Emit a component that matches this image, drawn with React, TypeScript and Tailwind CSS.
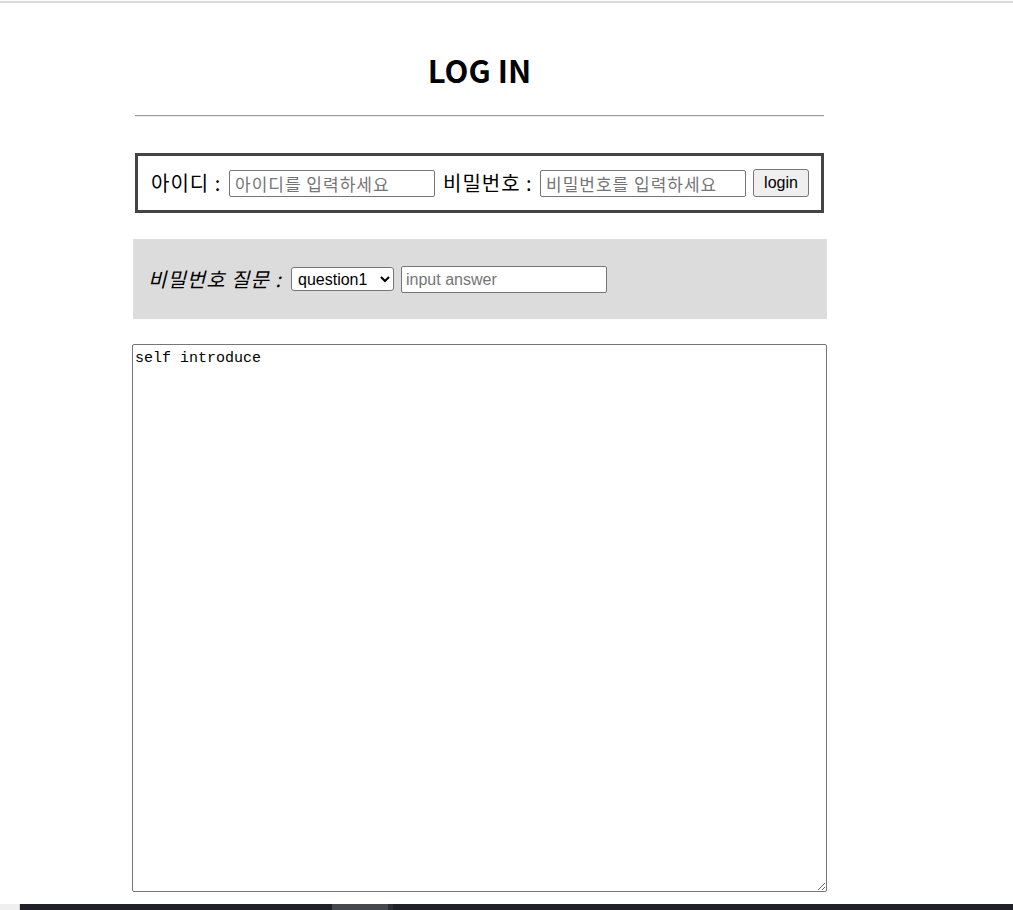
import React from "react";

const kr = "font-['Malgun_Gothic','Noto_Sans_CJK_KR',sans-serif]";

export default function App() {
  return (
    <div className="min-h-[910px] bg-white flex flex-col font-['Liberation_Sans','Noto_Sans_CJK_KR',sans-serif] text-black">
      <div className="h-px bg-white" />
      <div className="h-[2px] bg-[#dadade]" />
      <div className="ml-[132px] w-[695px] flex flex-col">
        <h1 className={`${kr} mt-[52px] text-center text-[31px] leading-[30px] font-bold`}>LOG IN</h1>
        <div className="mt-[30px] mx-[3px] h-[2px] border-t border-t-[#9c9c9c] border-b border-b-[#ececec]" />
        <div className="mt-[36px] mx-[3px] h-[60px] border-[3px] border-[#444444] flex items-center pl-[13px]">
          <span className={`${kr} w-[78px] text-[20px] tracking-[1px] whitespace-nowrap`}>아이디 :</span>
          <input
            type="text"
            placeholder="아이디를 입력하세요"
            className={`${kr} w-[206px] h-[27px] border border-[#767676] rounded-[2px] px-[5px] text-[17px] tracking-[1px] placeholder:text-[#757575] bg-white`}
          />
          <span className={`${kr} w-[105px] pl-[8px] text-[20px] tracking-[1px] whitespace-nowrap`}>비밀번호 :</span>
          <input
            type="password"
            placeholder="비밀번호를 입력하세요"
            className={`${kr} w-[206px] h-[27px] border border-[#767676] rounded-[2px] px-[5px] text-[17px] tracking-[1px] placeholder:text-[#757575] bg-white`}
          />
          <button className="ml-[7px] w-[56px] h-[28px] border border-[#767676] rounded-[3px] bg-[#efefef] text-[16px] font-['Liberation_Sans',sans-serif] leading-none">
            login
          </button>
        </div>
        <div className="mt-[26px] ml-px h-[80px] bg-[#dcdcdc] flex items-center pl-[15px]">
          <span className={`${kr} w-[143px] text-[20px] tracking-[1px] italic whitespace-nowrap`}>비밀번호 질문 :</span>
          <select className="w-[103px] h-[24px] border border-[#767676] rounded-[3px] bg-white text-[16px] font-['Liberation_Sans',sans-serif] pl-[2px]">
            <option>question1</option>
            <option>question2</option>
            <option>question3</option>
          </select>
          <input
            type="text"
            placeholder="input answer"
            className="ml-[7px] w-[206px] h-[27px] border border-[#767676] rounded-[2px] px-[4px] pt-[2px] text-[16px] bg-white font-['Liberation_Sans',sans-serif] placeholder:text-[#757575]"
          />
        </div>
        <textarea
          defaultValue="self introduce"
          className="mt-[25px] w-[695px] h-[548px] border border-[#767676] rounded-[2px] px-[2px] pt-[4px] text-[15px] leading-[19px] font-['Liberation_Mono',monospace] resize"
        />
      </div>
      <div className="mt-auto h-[6px] flex">
        <div className="w-[20px] bg-[#efefef] border-r border-[#d0d0d0]" />
        <div className="w-[312px] bg-[#1f2029]" />
        <div className="w-[56px] bg-[#45474e]" />
        <div className="w-[5px] bg-[#2c2d34]" />
        <div className="flex-1 bg-[#1f2029]" />
      </div>
    </div>
  );
}
